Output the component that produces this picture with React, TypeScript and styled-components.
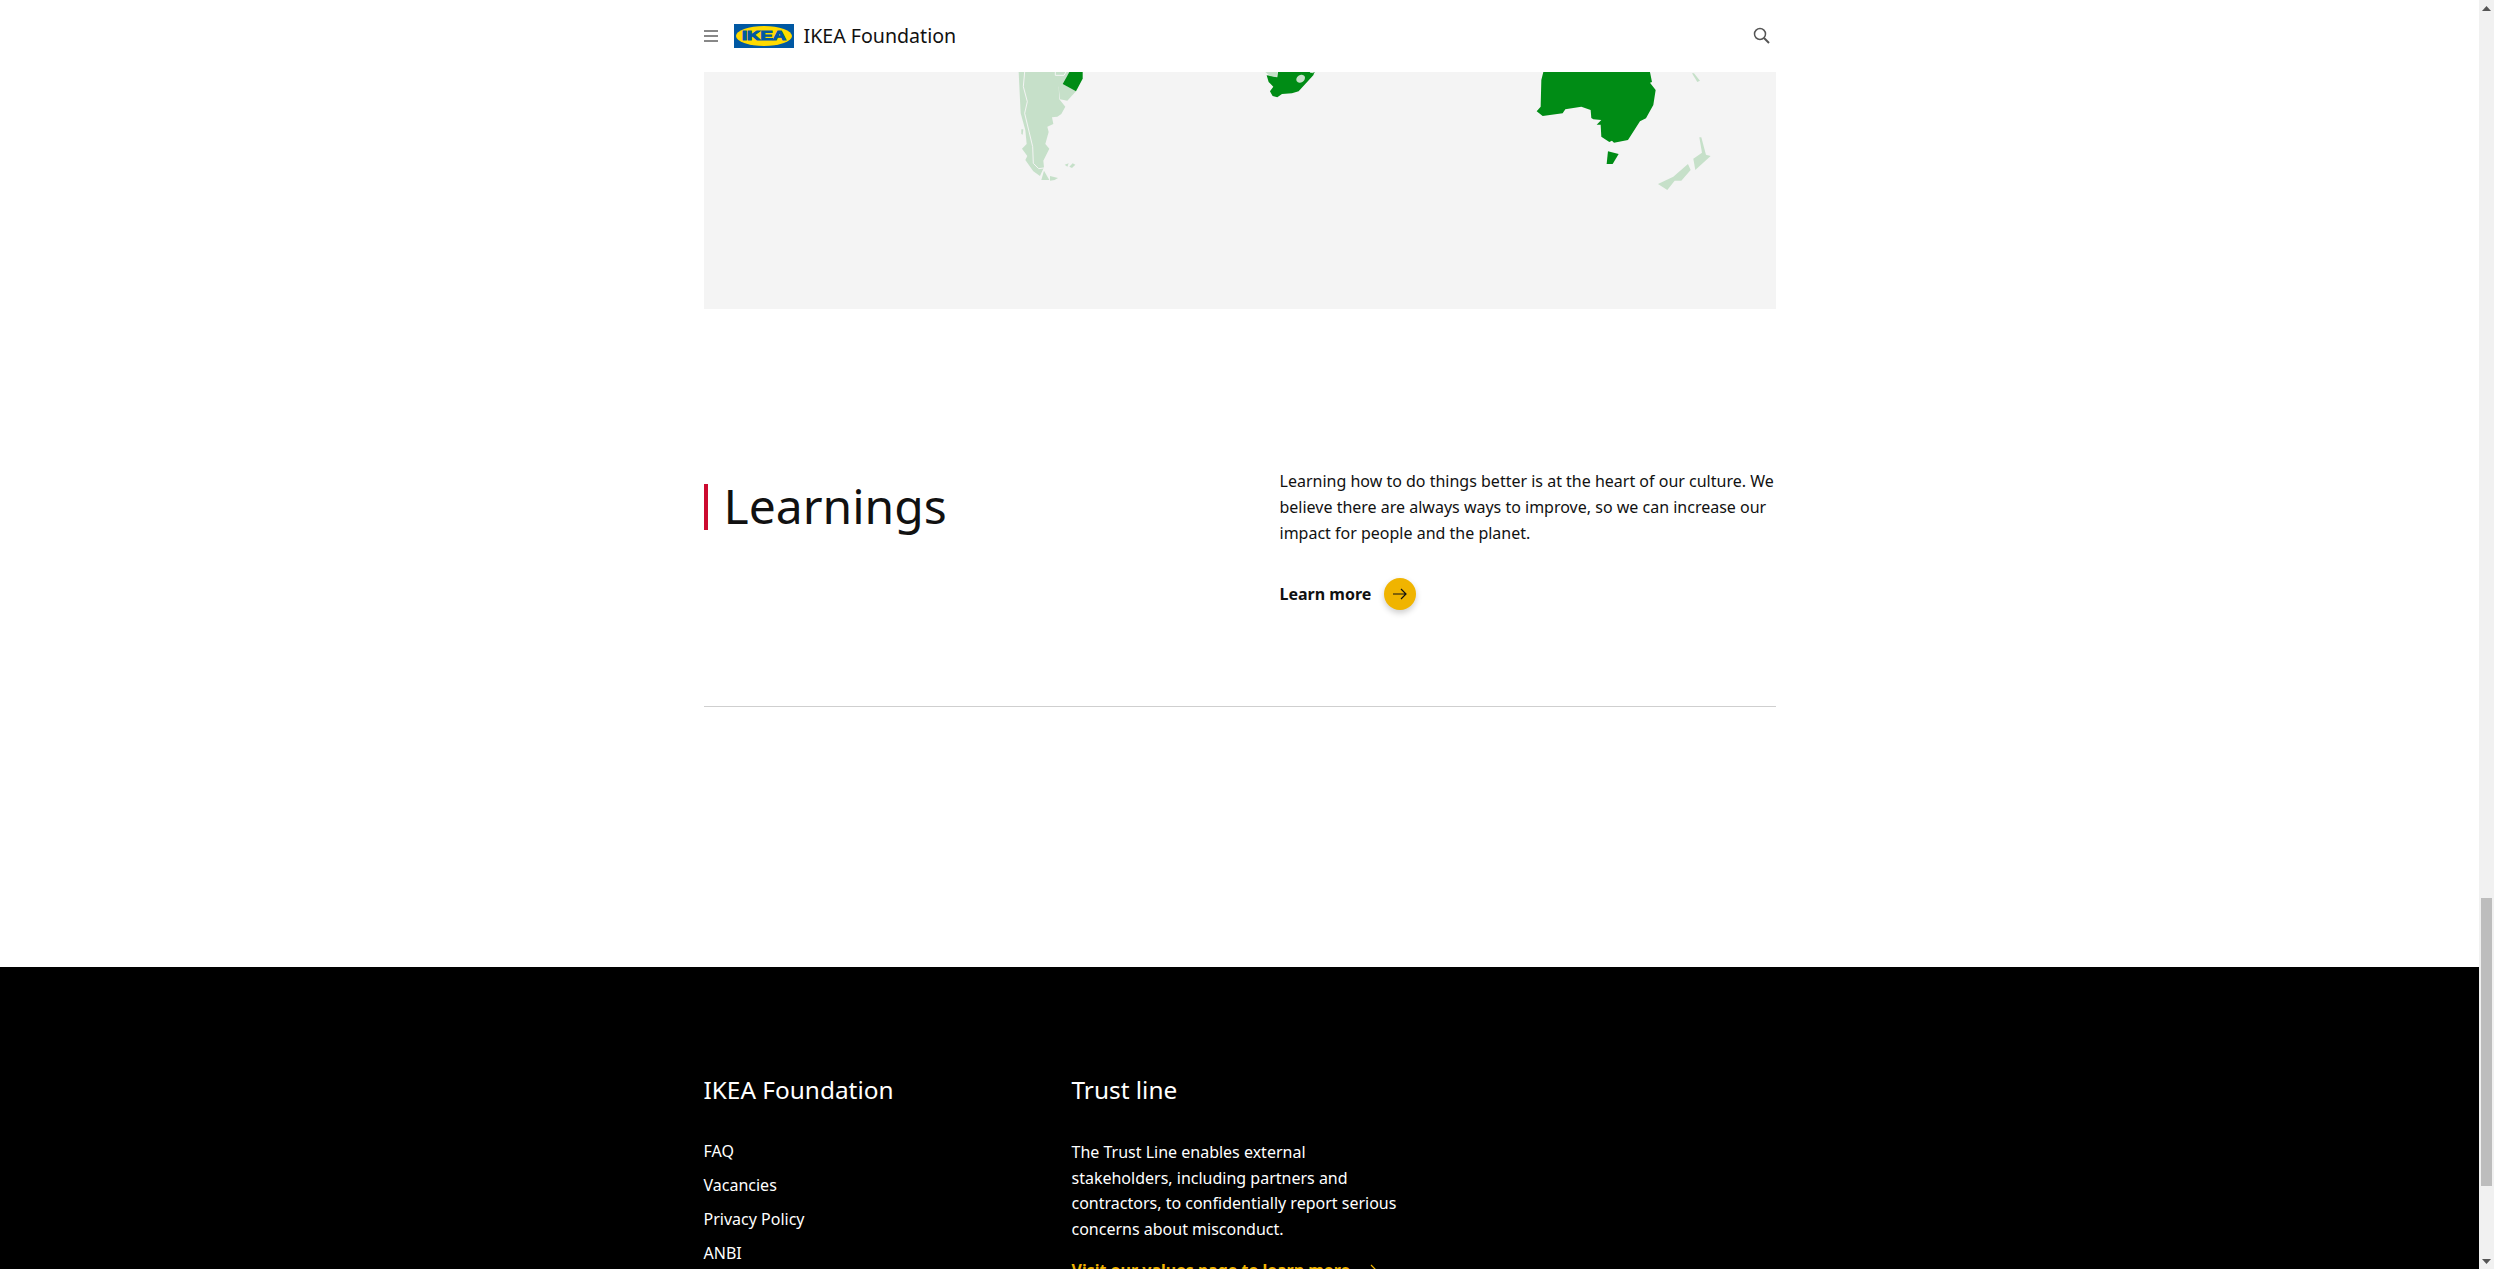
import styled, { createGlobalStyle } from 'styled-components';

const GlobalStyle = createGlobalStyle`
  html, body {
    margin: 0;
    height: 100%;
    overflow: hidden;
    background: #fff;
    font-family: 'Noto Sans', sans-serif;
    color: #111;
  }
`;

const Viewport = styled.div`
  display: flex;
  width: 2494px;
  height: 1269px;
  overflow: hidden;
`;

const Page = styled.div`
  flex: 1;
  min-width: 0;
  overflow: hidden;
`;

const Wrap = styled.div`
  width: 1072px;
  margin: 0 auto;
`;

const Header = styled.header`
  display: flex;
  align-items: center;
  height: 72px;
`;

const MenuButton = styled.svg`
  width: 14px;
  height: 12px;
  margin-right: 16px;
`;

const Logo = styled.svg`
  width: 60px;
  height: 24px;
  margin-right: 10px;
`;

const SiteName = styled.span`
  font-size: 19.6px;
  line-height: 24px;
`;

const SearchIcon = styled.svg`
  width: 20px;
  height: 20px;
  margin-left: auto;
  margin-right: 5px;
  margin-bottom: 2px;
`;

const MapPanel = styled.svg`
  display: block;
  width: 1072px;
  height: 237px;
  background: #f4f4f4;
`;

const Learnings = styled.section`
  display: grid;
  grid-template-columns: 576px 496px;
  padding: 158px 0 96px;
  border-bottom: 1px solid #cfcfcf;
`;

const Title = styled.h2`
  margin: 17px 0 0;
  height: 46px;
  padding-left: 16px;
  border-left: 4px solid #cc0a2f;
  font-size: 48px;
  font-weight: 400;
  line-height: 43px;
  color: #111;
`;

const Copy = styled.p`
  margin: 1px 0 0;
  font-size: 16px;
  line-height: 26px;
`;

const LearnMore = styled.a`
  display: flex;
  align-items: center;
  gap: 13px;
  margin-top: 32px;
  font-size: 16px;
  font-weight: 700;
  line-height: 32px;
  color: #111;
`;

const ArrowCircle = styled.span`
  display: flex;
  align-items: center;
  justify-content: center;
  width: 32px;
  height: 32px;
  border-radius: 50%;
  background: #f0b400;
  box-shadow: 0 3px 6px rgba(0, 0, 0, 0.2);
`;

const Footer = styled.footer`
  margin-top: 260px;
  height: 500px;
  background: #000;
  color: #fff;
`;

const FooterGrid = styled.div`
  display: grid;
  grid-template-columns: 368px 330px;
  padding-top: 107px;
`;

const FooterHeading = styled.h3`
  margin: 0 0 32px;
  font-size: 24.4px;
  font-weight: 400;
  line-height: 32px;
`;

const FooterLinks = styled.ul`
  display: flex;
  flex-direction: column;
  gap: 7.9px;
  margin: 0;
  padding: 0;
  list-style: none;
  font-size: 16px;
  line-height: 26px;
`;

const FooterCopy = styled.p`
  margin: 0;
  padding-top: 2px;
  font-size: 16px;
  line-height: 25.6px;
`;

const ValuesLink = styled.a`
  display: flex;
  align-items: center;
  gap: 12px;
  margin-top: 15px;
  font-size: 16px;
  font-weight: 700;
  line-height: 26px;
  color: #f0b400;
  white-space: nowrap;
`;

const Scrollbar = styled.div`
  display: flex;
  flex-direction: column;
  align-items: center;
  flex: 0 0 15px;
  height: 1269px;
  background: #f1f1f1;
`;

const ScrollArrow = styled.svg<{ $bottom?: boolean }>`
  flex: none;
  width: 9px;
  height: 5px;
  margin-top: ${(p) => (p.$bottom ? 'auto' : '6px')};
  margin-bottom: ${(p) => (p.$bottom ? '5px' : '0')};
`;

const ScrollThumb = styled.div`
  flex: none;
  width: 11px;
  height: 288px;
  margin-top: 887px;
  background: #bdbdbd;
`;

const Pale = styled.path`
  fill: #c6e0c9;
`;

const Green = styled.path`
  fill: #008c15;
`;

const Border = styled.path`
  fill: none;
  stroke: #f4f4f4;
  stroke-width: 3;
`;

const IkeaMark = () => (
  <Logo viewBox="0 0 60 24">
    <rect width="60" height="24" fill="#0058a3" />
    <ellipse cx="30" cy="12" rx="28" ry="10" fill="#ffdb00" />
    <text
      x="30"
      y="16.4"
      textAnchor="middle"
      fontFamily="'Liberation Sans', sans-serif"
      fontSize="12.5"
      fontWeight="700"
      textLength="44"
      lengthAdjust="spacingAndGlyphs"
      stroke="#0058a3"
      strokeWidth="1"
      fill="#0058a3"
    >
      IKEA
    </text>
  </Logo>
);

// shapes traced from 3x crops, so each group is offset + 1/3 scale
const WorldMap = () => (
  <MapPanel viewBox="704 72 1072 237">
    <g transform="translate(980 50) scale(0.3333)">
      <Pale d="M116 66L268 66L246 104L236 110L238 148L256 170L244 192L232 200L216 202L220 222L202 230L206 246L196 282L208 296L190 332L192 352L180 378L160 364L136 330L142 318L126 296L140 282L136 240L122 190Z" />
      <Border d="M134 66L130 110L142 155L134 190L158 290L160 340L176 356L192 354" />
      <Border d="M226 66L226 76L252 76L258 66" />
      <Pale d="M238 106L248 102L288 124L262 152L240 148L236 110Z" />
      <Green d="M268 66L308 66L308 86L288 124L248 102Z" />
      <Pale d="M192 362L208 390L184 390Z" />
      <Pale d="M210 378L234 384L224 390L210 392Z" />
      <Pale d="M254 344L266 340L262 350Z" />
      <Pale d="M268 350L278 340L286 344L276 354Z" />
      <Pale d="M124 238L130 238L128 254L124 252Z" />
      <Green d="M860 76L876 78L892 82L894 66L1004 66L1000 76L956 124L936 130L906 132L892 142L878 138L870 124L880 110L866 96Z" />
      <Pale d="M856 66L892 66L890 82L870 78Z" />
      <Pale d="M990 66L1002 66L1000 70L990 68Z" />
      <ellipse cx="962" cy="86" rx="14" ry="11" fill="#c6e0c9" transform="rotate(-35 962 86)" />
    </g>
    <g transform="translate(1480 50) scale(0.3333)">
      <Green d="M190 66L510 66L516 96L510 98L527 120L520 165L498 205L480 214L444 270L402 278L396 272L388 276L364 260L362 224L350 224L364 210L340 208L334 204L332 180L304 170L256 178L248 190L188 198L170 184L182 170L184 90Z" />
      <Green d="M384 304L416 312L398 342L380 342Z" />
      <Pale d="M658 262L664 262L678 314L692 318L646 360L640 326L666 308Z" />
      <Pale d="M624 342L632 360L604 392L584 392L562 420L534 402L580 380Z" />
      <Pale d="M636 70L642 70L660 92L652 96Z" />
    </g>
  </MapPanel>
);

const ArrowRight = ({ color }: { color: string }) => (
  <svg width="16" height="16" viewBox="0 0 16 16" fill="none">
    <path d="M1 8H14M9 3L14 8L9 13" stroke={color} strokeWidth="1.2" />
  </svg>
);

export default function App() {
  return (
    <>
      <GlobalStyle />
      <Viewport>
        <Page>
          <Wrap>
            <Header>
              <MenuButton viewBox="0 0 14 12">
                <path d="M0 1H14M0 6H14M0 11H14" stroke="#111" strokeWidth="1" fill="none" />
              </MenuButton>
              <IkeaMark />
              <SiteName>IKEA Foundation</SiteName>
              <SearchIcon viewBox="0 0 20 20">
                <circle cx="9" cy="9" r="5.5" fill="none" stroke="#555" strokeWidth="1.5" />
                <path d="M13 13L18 18" stroke="#555" strokeWidth="2" />
              </SearchIcon>
            </Header>
            <WorldMap />
            <Learnings>
              <Title>Learnings</Title>
              <div>
                <Copy>
                  Learning how to do things better is at the heart of our culture. We believe there are always ways to
                  improve, so we can increase our impact for people and the planet.
                </Copy>
                <LearnMore>
                  Learn more
                  <ArrowCircle>
                    <ArrowRight color="#111" />
                  </ArrowCircle>
                </LearnMore>
              </div>
            </Learnings>
          </Wrap>
          <Footer>
            <Wrap>
              <FooterGrid>
                <div>
                  <FooterHeading>IKEA Foundation</FooterHeading>
                  <FooterLinks>
                    <li>FAQ</li>
                    <li>Vacancies</li>
                    <li>Privacy Policy</li>
                    <li>ANBI</li>
                  </FooterLinks>
                </div>
                <div>
                  <FooterHeading>Trust line</FooterHeading>
                  <FooterCopy>
                    The Trust Line enables external stakeholders, including partners and contractors, to confidentially
                    report serious concerns about misconduct.
                  </FooterCopy>
                  <ValuesLink>
                    Visit our values page to learn more
                    <ArrowRight color="#f0b400" />
                  </ValuesLink>
                </div>
              </FooterGrid>
            </Wrap>
          </Footer>
        </Page>
        <Scrollbar>
          <ScrollArrow viewBox="0 0 9 5">
            <path d="M0 5L4.5 0L9 5Z" fill="#555" />
          </ScrollArrow>
          <ScrollThumb />
          <ScrollArrow $bottom viewBox="0 0 9 5">
            <path d="M0 0L4.5 5L9 0Z" fill="#555" />
          </ScrollArrow>
        </Scrollbar>
      </Viewport>
    </>
  );
}
